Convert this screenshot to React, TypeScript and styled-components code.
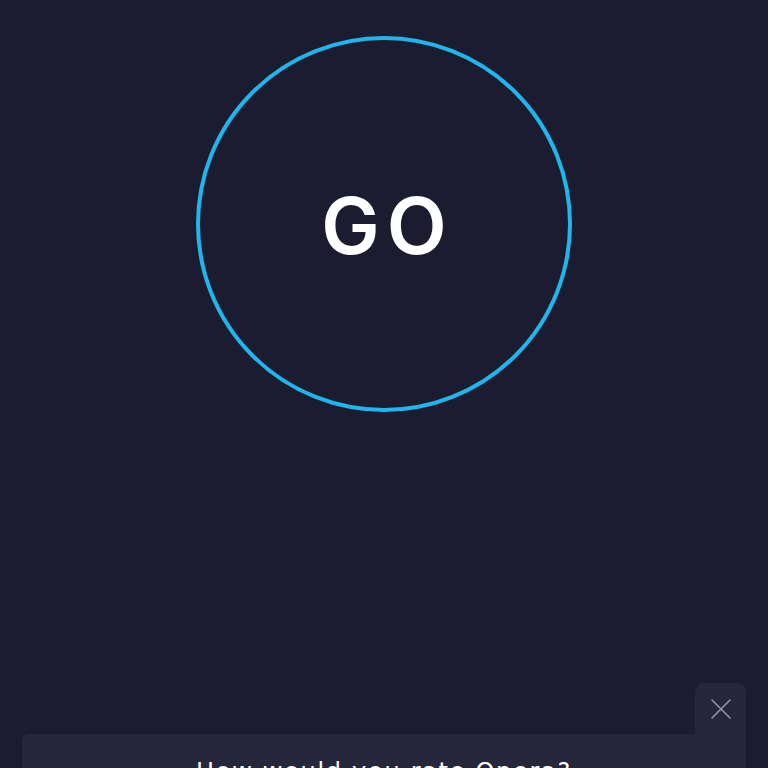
import React from "react";
import styled, { createGlobalStyle } from "styled-components";

const Global = createGlobalStyle`
  html, body { margin: 0; padding: 0; background: #1b1c2f; }
  * { box-sizing: border-box; }
`;

const Page = styled.div`
  width: 768px;
  height: 768px;
  overflow: hidden;
  background: #1b1c2f;
  display: flex;
  flex-direction: column;
  align-items: center;
  font-family: "Inter", "Noto Sans", sans-serif;
`;

const GoButton = styled.button`
  margin-top: 36px;
  width: 376px;
  height: 376px;
  flex-shrink: 0;
  border-radius: 50%;
  border: 4px solid #1fb6ee;
  background: transparent;
  display: flex;
  align-items: center;
  justify-content: center;
  color: #ffffff;
  font-family: "Inter", "Noto Sans", sans-serif;
  font-weight: 600;
  font-size: 78px;
  letter-spacing: 7px;
  padding: 2px 0 0 7px;
  cursor: pointer;
`;

const Bottom = styled.div`
  margin-top: 271px;
  width: 100%;
  padding: 0 22px;
  display: flex;
  flex-direction: column;
  align-items: flex-end;
`;

const CloseTab = styled.button`
  width: 51px;
  height: 51px;
  border: none;
  border-radius: 9px 9px 0 0;
  background: #26273a;
  display: flex;
  align-items: center;
  justify-content: center;
  padding: 0;
  color: #9495a4;
`;

const Panel = styled.div`
  width: 100%;
  height: 160px;
  background: #26273a;
  border-radius: 6px 0 6px 6px;
  padding-top: 24px;
  display: flex;
  justify-content: center;
`;

const Question = styled.div`
  color: #ffffff;
  font-size: 24px;
  font-weight: 500;
  letter-spacing: 1.7px;
  font-family: "DejaVu Sans", "Noto Sans", sans-serif;
`;

export default function App() {
  return (
    <>
      <Global />
      <Page>
        <GoButton>GO</GoButton>
        <Bottom>
          <CloseTab aria-label="Close">
            <svg width="22" height="22" viewBox="0 0 22 22" fill="none" stroke="currentColor" strokeWidth="1.6" strokeLinecap="round">
              <path d="M2 2 L20 20 M20 2 L2 20" />
            </svg>
          </CloseTab>
          <Panel>
            <Question>How would you rate Opera?</Question>
          </Panel>
        </Bottom>
      </Page>
    </>
  );
}
